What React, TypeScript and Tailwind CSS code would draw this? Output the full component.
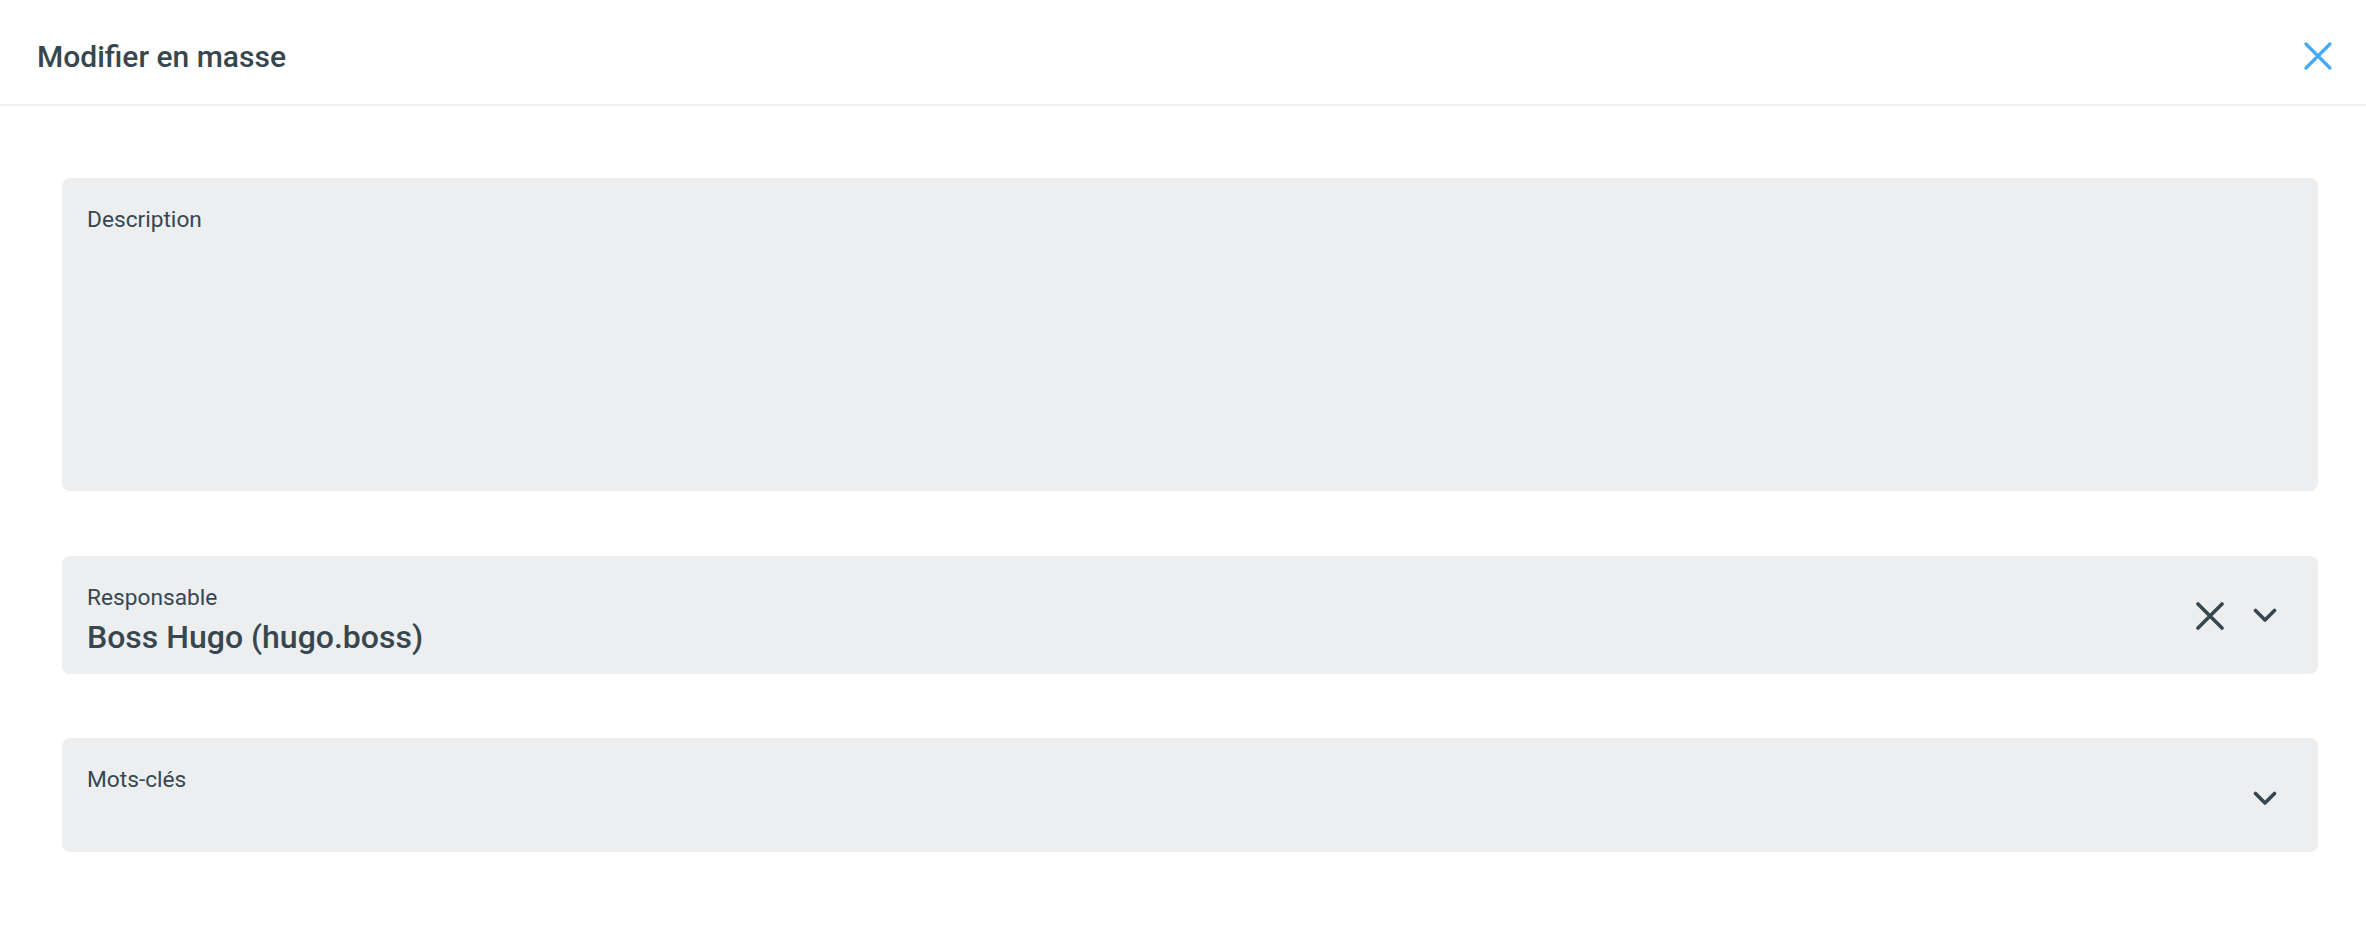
import React from "react";

const XIcon = ({ className, w = 3 }: { className?: string; w?: number }) => (
  <svg width="28" height="28" viewBox="0 0 28 28" className={className} fill="none">
    <path d="M2 2L26 26M26 2L2 26" stroke="currentColor" strokeWidth={w} strokeLinecap="round" />
  </svg>
);

const Chevron = () => (
  <svg width="24" height="16" viewBox="0 0 24 16" fill="none">
    <polyline
      points="2.5,2.5 12,12 21.5,2.5"
      stroke="currentColor"
      strokeWidth="3.6"
      strokeLinecap="round"
      strokeLinejoin="round"
    />
  </svg>
);

export default function App() {
  return (
    <div
      className="w-[2366px] h-[928px] bg-white text-[#37474f] overflow-hidden"
      style={{ fontFamily: "Roboto, 'Noto Sans', sans-serif" }}
    >
      <header className="h-[106px] border-b-2 border-[#efefef] flex items-start justify-between pl-[37px] pr-[34px] pt-[42px]">
        <h1 className="text-[30px] leading-[30px] font-medium">Modifier en masse</h1>
        <XIcon className="text-[#45aaf5]" w={3.2} />
      </header>

      <main className="pl-[62px] pr-[48px] pt-[72px] flex flex-col">
        <div className="h-[313px] bg-[#edeef0] rounded-[8px] pl-[25px] pt-[30px]">
          <div className="text-[22.7px] leading-[24px]">Description</div>
        </div>

        <div className="mt-[65px] h-[118px] bg-[#edeef0] rounded-[8px] pl-[25px] pr-[41px] flex items-start">
          <div className="flex-1 pt-[30px]">
            <div className="text-[22.7px] leading-[24px]">Responsable</div>
            <div className="mt-[9px] text-[32px] leading-[36px] font-medium">Boss Hugo (hugo.boss)</div>
          </div>
          <div className="mt-[46px] h-[28px] flex items-center gap-[29px]">
            <XIcon w={3.6} />
            <Chevron />
          </div>
        </div>

        <div className="mt-[64px] h-[114px] bg-[#edeef0] rounded-[8px] pl-[25px] pr-[41px] flex items-start">
          <div className="flex-1 pt-[30px]">
            <div className="text-[22.7px] leading-[24px]">Mots-clés</div>
          </div>
          <div className="mt-[47px] h-[28px] flex items-center">
            <Chevron />
          </div>
        </div>
      </main>
    </div>
  );
}
